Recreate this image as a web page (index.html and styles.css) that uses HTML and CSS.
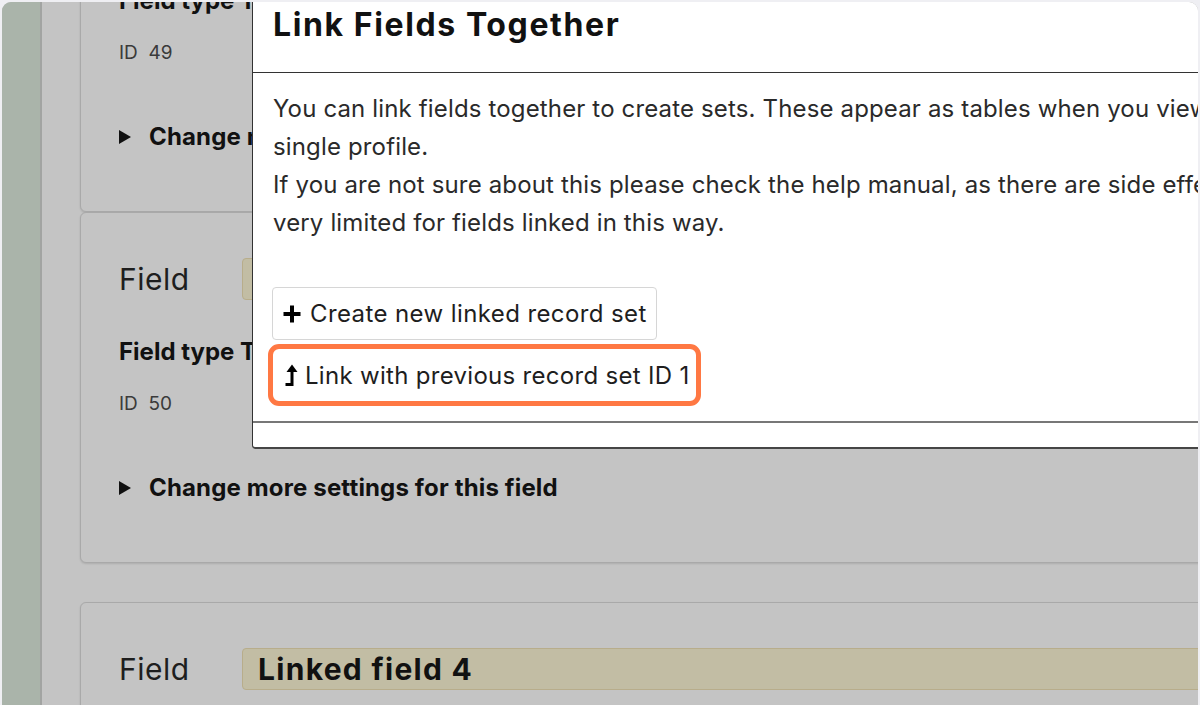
FILE: index.html
```html
<!DOCTYPE html>
<html lang="en">
<head>
<meta charset="utf-8">
<title>Link Fields Together</title>
<link rel="stylesheet" href="styles.css">
</head>
<body>
<div class="screen">
  <aside class="sidebar"></aside>
  <main class="main">
    <div class="cards">
      <section class="card">
        <div class="field-row"><span class="field-label">Field</span><div class="field-input">Linked field 2</div></div>
        <div class="field-type">Field type Text</div>
        <div class="field-id">ID&nbsp; 49</div>
        <div class="more"><span class="tri"></span>Change more settings for this field</div>
      </section>
      <section class="card">
        <div class="field-row"><span class="field-label">Field</span><div class="field-input">Linked field 3</div></div>
        <div class="field-type">Field type Text</div>
        <div class="field-id">ID&nbsp; 50</div>
        <div class="more"><span class="tri"></span>Change more settings for this field</div>
      </section>
      <section class="card spaced">
        <div class="field-row"><span class="field-label">Field</span><div class="field-input">Linked field 4</div></div>
        <div class="field-type">Field type Text</div>
        <div class="field-id">ID&nbsp; 51</div>
        <div class="more"><span class="tri"></span>Change more settings for this field</div>
      </section>
    </div>
  </main>

  <div class="modal">
    <div class="modal-head">
      <h2>Link Fields Together</h2>
    </div>
    <div class="modal-body">
      <p>You can link fields together to create sets. These appear as tables when you view a<br>single profile.<br>If you are not sure about this please check the help manual, as there are side effects and search is<br>very limited for fields linked in this way.</p>
      <div class="actions">
        <button class="btn" type="button">
          <svg class="ic-plus" width="20" height="20" viewBox="0 0 20 20" aria-hidden="true"><path d="M10 1.5v17M1.5 10h17" stroke="#000" stroke-width="4" fill="none"/></svg>
          <span>Create new linked record set</span>
        </button>
        <button class="btn btn-focus" type="button">
          <svg class="ic-up" width="16" height="24" viewBox="0 0 16 24" aria-hidden="true"><path d="M2.5 21.5H9V7" stroke="#000" stroke-width="3" fill="none"/><path d="M3.5 9L9 1.5L14.5 9Z" fill="#000"/></svg>
          <span>Link with previous record set ID 1</span>
        </button>
      </div>
    </div>
    <div class="modal-foot"></div>
  </div>
</div>
</body>
</html>
```

FILE: styles.css
```css
* { box-sizing: border-box; }
html, body { margin: 0; padding: 0; }
body {
  background: #efeff3;
  font-family: Inter, "Noto Sans", sans-serif;
  color: #222;
  overflow: hidden;
  height: 705px;
}
.screen {
  position: relative;
  margin: 2px 2px 0 2px;
  height: 703px;
  border-radius: 9px 9px 0 0;
  overflow: hidden;
  display: flex;
  background: #c4c4c4;
}
.sidebar {
  flex: 0 0 40px;
  background: #aab4aa;
  border-right: 2px solid #a2a4a2;
}
.main {
  flex: 1;
  min-width: 0;
  padding-left: 38px;
  overflow: hidden;
}
.cards {
  margin-top: -141px;
  margin-right: -40px;
}
.card {
  border: 1px solid #a9a9a9;
  border-radius: 6px;
  box-shadow: 0 1px 2px rgba(0, 0, 0, 0.12);
  padding: 45px 0 60px 38px;
  background: #c4c4c4;
}
.card.spaced { margin-top: 39px; }
.field-row {
  display: flex;
  align-items: center;
  height: 42px;
}
.field-label {
  flex: 0 0 123px;
  font-size: 30px;
  letter-spacing: 0.5px;
  color: #1e1e1e;
}
.field-input {
  flex: 1;
  height: 42px;
  display: flex;
  align-items: center;
  padding-left: 15px;
  background: #c2bda4;
  border: 1px solid #b8ad8b;
  border-radius: 4px;
  font-size: 30px;
  letter-spacing: 1.3px;
  font-weight: 700;
  color: #111;
}
.field-type {
  margin-top: 38px;
  font-size: 24px;
  line-height: 28px;
  font-weight: 700;
  color: #111;
}
.field-id {
  margin-top: 26px;
  font-size: 19px;
  line-height: 24px;
  color: #3a3a3a;
}
.more {
  margin-top: 58px;
  display: flex;
  align-items: center;
  font-size: 24px;
  letter-spacing: 0.15px;
  line-height: 28px;
  font-weight: 700;
  color: #111;
}
.tri {
  width: 0;
  height: 0;
  border-top: 7px solid transparent;
  border-bottom: 7px solid transparent;
  border-left: 12px solid #111;
  margin-right: 18px;
}
.modal {
  position: absolute;
  left: 250px;
  top: -10px;
  width: 1100px;
  background: #fff;
  border: 1px solid #333;
  border-bottom: 2px solid #454545;
  border-radius: 4px;
}
.modal-head {
  padding: 12px 20px 27px;
  border-bottom: 1px solid #333;
}
.modal-head h2 {
  margin: 0;
  font-size: 32px;
  letter-spacing: 1.6px;
  line-height: 40px;
  font-weight: 700;
  color: #111;
}
.modal-body {
  padding: 17px 20px 20px 20px;
}
.modal-body p {
  margin: 0;
  font-size: 24px;
  letter-spacing: 0.15px;
  line-height: 38px;
  white-space: nowrap;
  color: #2a2a2a;
}
.actions {
  margin-top: 45px;
  display: flex;
  flex-direction: column;
  align-items: flex-start;
  gap: 9px;
}
.btn {
  display: inline-flex;
  align-items: center;
  gap: 8px;
  height: 53px;
  margin-left: -1px;
  padding: 0 9px;
  background: #fff;
  border: 1px solid #d6d6d6;
  border-radius: 4px;
  font-family: inherit;
  font-size: 24px;
  letter-spacing: 0.4px;
  color: #1e1e1e;
}
.btn-focus {
  height: 52px;
  margin-left: 0;
  gap: 6px;
  padding: 0 6px 0 9px;
  letter-spacing: 0.3px;
  border-color: #fff;
  border-radius: 6px;
  outline: 5px solid #ff7843;
  outline-offset: 0;
}
.modal-foot {
  height: 26px;
  border-top: 2px solid #777;
}
```
